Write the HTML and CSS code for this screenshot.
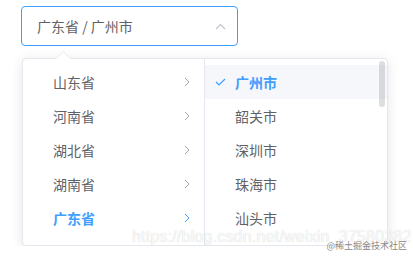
FILE: index.html
```html
<!DOCTYPE html>
<html>
<head>
<meta charset="utf-8">
<link rel="stylesheet" href="styles.css">
</head>
<body>

<div class="cascader">
  <div class="cascader-input">
    <span class="input-value">广东省 / 广州市</span>
    <svg class="input-arrow" width="11" height="7" viewBox="0 0 11 7">
      <path d="M1 6 L5.5 1.5 L10 6" fill="none" stroke="#c0c4cc" stroke-width="1.2"/>
    </svg>
  </div>

  <div class="cascader-panel">
    <div class="popper-arrow"></div>

    <ul class="cascader-menu">
      <li class="node">山东省<svg class="node-arrow" width="6" height="10" viewBox="0 0 6 10"><path d="M1 1 L5 5 L1 9" fill="none" stroke="#a0a3a8" stroke-width="1"/></svg></li>
      <li class="node">河南省<svg class="node-arrow" width="6" height="10" viewBox="0 0 6 10"><path d="M1 1 L5 5 L1 9" fill="none" stroke="#a0a3a8" stroke-width="1"/></svg></li>
      <li class="node">湖北省<svg class="node-arrow" width="6" height="10" viewBox="0 0 6 10"><path d="M1 1 L5 5 L1 9" fill="none" stroke="#a0a3a8" stroke-width="1"/></svg></li>
      <li class="node">湖南省<svg class="node-arrow" width="6" height="10" viewBox="0 0 6 10"><path d="M1 1 L5 5 L1 9" fill="none" stroke="#a0a3a8" stroke-width="1"/></svg></li>
      <li class="node active">广东省<svg class="node-arrow" width="6" height="10" viewBox="0 0 6 10"><path d="M1 1 L5 5 L1 9" fill="none" stroke="#409eff" stroke-width="1"/></svg></li>
    </ul>

    <ul class="cascader-menu last">
      <li class="node active selected">
        <svg class="node-check" width="11" height="8" viewBox="0 0 11 8"><path d="M1 4 L4 7 L10 1" fill="none" stroke="#409eff" stroke-width="1.2"/></svg>广州市
      </li>
      <li class="node">韶关市</li>
      <li class="node">深圳市</li>
      <li class="node">珠海市</li>
      <li class="node">汕头市</li>
      <div class="scroll-thumb"></div>
    </ul>
  </div>
</div>

<div class="watermark">
  <span class="wm-url">https://blog.csdn.net/weixin_37580382</span>
  <span class="wm-site">@稀土掘金技术社区</span>
</div>

</body>
</html>
```

FILE: styles.css
```css
body {
    margin: 0;
    background: #fff;
    font-family: "Helvetica Neue", "Liberation Sans", "Noto Sans CJK SC", sans-serif;
    font-size: 14px;
    color: #606266;
}

/* input box */
.cascader {
    padding: 6px 0 0 21px;
}
.cascader-input {
    box-sizing: border-box;
    width: 217px;
    height: 40px;
    border: 1px solid #409eff;
    border-radius: 4px;
    display: flex;
    align-items: center;
    padding: 0 10px 0 15px;
}
.input-value {
    flex: 1;
    font-family: "Noto Sans CJK SC", sans-serif;
}
.input-arrow {
    margin-right: 1px;
}

/* dropdown */
.cascader-panel {
    position: relative;
    display: flex;
    width: 364px;
    margin: 12px 0 0 1px;
    border: 1px solid #e4e7ed;
    border-radius: 4px;
    background: #fff;
    box-shadow: 0 2px 12px 0 rgba(0, 0, 0, .1);
}
.popper-arrow {
    position: absolute;
    top: -6px;
    left: 35px;
    width: 10px;
    height: 10px;
    background: #fff;
    border-top: 1px solid #ebeef5;
    border-left: 1px solid #ebeef5;
    transform: rotate(45deg);
}

.cascader-menu {
    position: relative;
    list-style: none;
    margin: 0;
    padding: 6px 0;
    width: 181px;
    height: 174px;
    overflow: hidden;
    border-right: 1px solid #e4e7ed;
}
.cascader-menu.last {
    border-right: none;
    width: 182px;
}

.node {
    position: relative;
    display: flex;
    align-items: center;
    height: 34px;
    padding: 0 14px 0 30px;
    font-family: "Noto Sans CJK SC", sans-serif;
}
.node-arrow {
    margin-left: auto;
}
.node.active {
    color: #409eff;
    font-weight: bold;
}
.node.selected {
    background: #f5f7fa;
}
.node-check {
    position: absolute;
    left: 10px;
    top: 13px;
}

.scroll-thumb {
    position: absolute;
    top: 2px;
    right: 2px;
    width: 6px;
    height: 46px;
    border-radius: 4px;
    background: rgba(144, 147, 153, .3);
}

/* screenshot watermark */
.watermark {
    position: absolute;
    left: 132px;
    top: 229px;
    width: 275px;
    height: 24px;
}
.wm-url {
    position: absolute;
    left: 0;
    top: 0;
    line-height: 16px;
    font-family: "Liberation Sans", sans-serif;
    font-size: 16px;
    letter-spacing: 0.2px;
    color: rgba(255, 255, 255, .9);
    text-shadow: 0 0 1px rgba(0, 0, 0, .22);
}
.wm-site {
    position: absolute;
    right: 0;
    top: 11px;
    line-height: 11px;
    font-family: "Noto Sans CJK SC", sans-serif;
    font-size: 9px;
    color: #888;
    text-shadow: 0 0 1px #fff;
}
```
